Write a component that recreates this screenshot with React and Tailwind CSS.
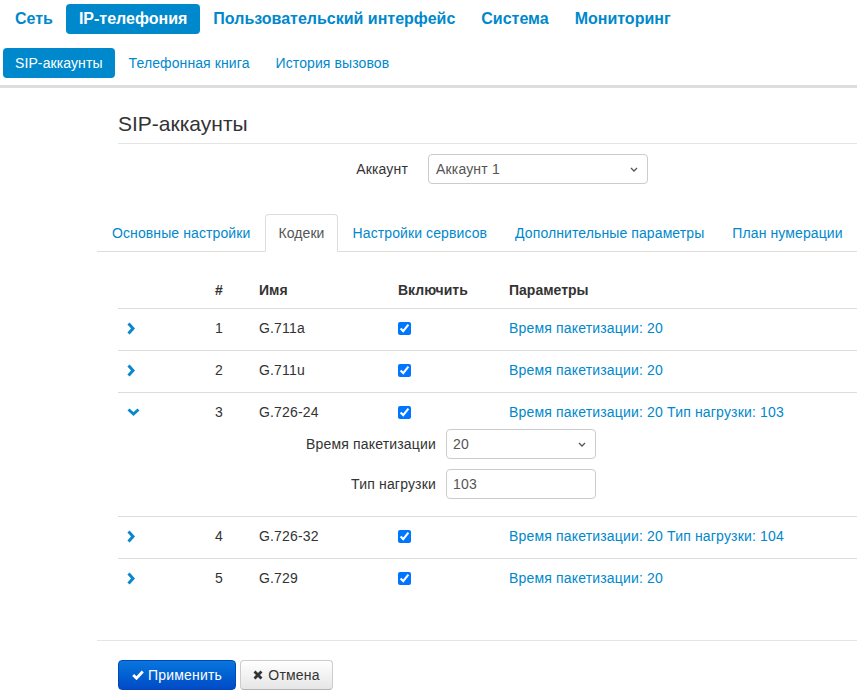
const TOP = ["Сеть", "IP-телефония", "Пользовательский интерфейс", "Система", "Мониторинг"];
const SUB = ["SIP-аккаунты", "Телефонная книга", "История вызовов"];
const TABS = ["Основные настройки", "Кодеки", "Настройки сервисов", "Дополнительные параметры", "План нумерации"];
const CODECS = [
  { n: 1, name: "G.711a", params: "Время пакетизации: 20" },
  { n: 2, name: "G.711u", params: "Время пакетизации: 20" },
  { n: 3, name: "G.726-24", params: "Время пакетизации: 20 Тип нагрузки: 103", open: true },
  { n: 4, name: "G.726-32", params: "Время пакетизации: 20 Тип нагрузки: 104" },
  { n: 5, name: "G.729", params: "Время пакетизации: 20" },
];

function ChevronRight() {
  return (
    <svg width="9" height="13" viewBox="0 0 9 13" className="block">
      <path d="M1.5 1.5 L6 6.5 L1.5 11.5" fill="none" stroke="#0a88cc" strokeWidth="3" />
    </svg>
  );
}

function ChevronDown() {
  return (
    <svg width="13" height="9" viewBox="0 0 13 9" className="block">
      <path d="M1.5 1.5 L6.5 6 L11.5 1.5" fill="none" stroke="#0a88cc" strokeWidth="3" />
    </svg>
  );
}

function SmallCaret() {
  return (
    <svg width="8" height="5" viewBox="0 0 8 5" className="block">
      <path d="M1 1 L4 4 L7 1" fill="none" stroke="#555" strokeWidth="1.3" />
    </svg>
  );
}

function FakeSelect({ value, className }) {
  return (
    <div className={`flex h-[30px] items-center justify-between rounded-[4px] border border-[#ccc] bg-white pl-[6px] pr-[9px] text-[#555] ${className}`}>
      <span>{value}</span>
      <SmallCaret />
    </div>
  );
}

export default function App() {
  return (
    <div className="min-h-[696px] bg-white font-['Liberation_Sans',Arial,sans-serif] text-[14px] text-[#333]">
      <header>
        <nav className="flex pl-[2px] pt-1">
          {TOP.map((t) => (
            <span
              key={t}
              className={`h-[30px] rounded-[4px] px-[13px] text-[16px] font-bold leading-[30px] ${
                t === "IP-телефония" ? "bg-[#0088cc] text-white" : "text-[#0088cc]"
              }`}
            >
              {t}
            </span>
          ))}
        </nav>
        <nav className="mt-[14px] flex gap-[2px] pl-[3px] tracking-[0.1px]">
          {SUB.map((t) => (
            <span
              key={t}
              className={`h-[30px] rounded-[4px] px-3 leading-[30px] ${
                t === "SIP-аккаунты" ? "bg-[#0088cc] text-white" : "text-[#0088cc]"
              }`}
            >
              {t}
            </span>
          ))}
        </nav>
        <div className="mt-[7px] h-[3px] bg-[#dddddd]" />
      </header>

      <main className="overflow-hidden pb-[6px] pl-[97px] tracking-[0.17px]">
        <h1 className="ml-[21px] mt-[21px] border-b border-[#e5e5e5] pb-[4px] text-[21px] leading-[30px] tracking-normal text-[#333]">
          SIP-аккаунты
        </h1>

        <div className="ml-[21px] mt-[10px] flex items-center gap-5">
          <label className="w-[290px] text-right leading-[30px]">Аккаунт</label>
          <FakeSelect value="Аккаунт 1" className="w-[220px] pl-[7px]" />
        </div>

        <ul className="mt-[30px] flex border-b border-[#ddd] pl-[2px] tracking-[0.1px]">
          {TABS.map((t) => (
            <li key={t} className="-mb-px mr-[2px] shrink-0">
              <span
                className={`block whitespace-nowrap rounded-t-[4px] border px-3 py-2 leading-5 ${
                  t === "Кодеки"
                    ? "border-[#ddd] border-b-transparent bg-white text-[#555]"
                    : "border-transparent text-[#0088cc]"
                }`}
              >
                {t}
              </span>
            </li>
          ))}
        </ul>

        <div className="ml-[21px] mt-[20px]">
          <div className="grid grid-cols-[97px_44px_139px_111px_1fr] py-2 font-bold leading-5 tracking-normal">
            <div />
            <div>#</div>
            <div>Имя</div>
            <div>Включить</div>
            <div>Параметры</div>
          </div>

          {CODECS.map((c) => (
            <div
              key={c.n}
              className={`grid grid-cols-[97px_44px_139px_111px_1fr] border-t border-[#ddd] pt-[9px] leading-5 ${
                c.open ? "pb-[17px]" : "pb-[12px]"
              }`}
            >
              <div className="flex h-5 items-center pl-[9px]">{c.open ? <ChevronDown /> : <ChevronRight />}</div>
              <div>{c.n}</div>
              <div>{c.name}</div>
              <div className="flex h-5 items-center">
                <input type="checkbox" defaultChecked className="m-0 h-[13px] w-[13px]" />
              </div>
              <div className="whitespace-nowrap text-[#0088cc]">{c.params}</div>
              {c.open && (
                <div className="col-span-5 mt-[7px] flex flex-col gap-[10px]">
                  <div className="flex items-center">
                    <label className="w-[318px] text-right">Время пакетизации</label>
                    <FakeSelect value="20" className="ml-[10px] w-[150px]" />
                  </div>
                  <div className="flex items-center">
                    <label className="w-[318px] text-right">Тип нагрузки</label>
                    <div className="ml-[10px] flex h-[30px] w-[150px] items-center rounded-[4px] border border-[#ccc] pl-[6px] text-[#555]">
                      103
                    </div>
                  </div>
                </div>
              )}
            </div>
          ))}
        </div>

        <div className="mt-[40px] border-t border-[#e5e5e5]" />

        <div className="ml-[21px] mt-[19px] flex gap-[4px]">
          <button
            type="button"
            className="flex h-[30px] w-[118px] items-center justify-center gap-[4px] rounded-[4px] border border-[#0346b8] bg-gradient-to-b from-[#0a76de] to-[#024ac6] text-white"
          >
            <svg width="12" height="10" viewBox="0 0 12 10" className="block">
              <path d="M1.2 5 L4.5 8.2 L10.8 1.5" fill="none" stroke="white" strokeWidth="2.8" />
            </svg>
            Применить
          </button>
          <button
            type="button"
            className="flex h-[30px] w-[93px] items-center justify-center gap-[5px] rounded-[4px] border border-[#ccc] border-b-[#b3b3b3] bg-gradient-to-b from-white to-[#e6e6e6] text-[#333]"
          >
            <svg width="10" height="10" viewBox="0 0 10 10" className="block">
              <path d="M1.5 1.5 L8.5 8.5 M8.5 1.5 L1.5 8.5" fill="none" stroke="#333" strokeWidth="2.8" />
            </svg>
            Отмена
          </button>
        </div>
      </main>
    </div>
  );
}
